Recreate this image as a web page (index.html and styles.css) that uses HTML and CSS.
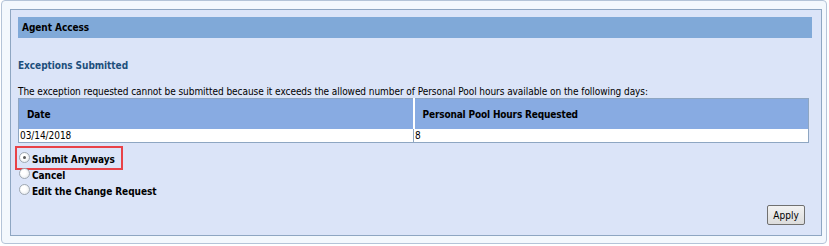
FILE: index.html
```html
<!DOCTYPE html>
<html lang="en">
<head>
    <meta charset="UTF-8">
    <title>Agent Access</title>
    <link rel="stylesheet" href="styles.css">
</head>
<body>
    <div class="window">
        <div class="panel">
            <div class="panel-title">Agent Access</div>
            <h2 class="section-title">Exceptions Submitted</h2>
            <p class="message">The exception requested cannot be submitted because it exceeds the allowed number of Personal Pool hours available on the following days:</p>
            <table class="grid">
                <thead>
                    <tr>
                        <th class="col-date">Date</th>
                        <th>Personal Pool Hours Requested</th>
                    </tr>
                </thead>
                <tbody>
                    <tr>
                        <td>03/14/2018</td>
                        <td>8</td>
                    </tr>
                </tbody>
            </table>
            <div class="options">
                <label class="option highlighted"><span class="radio checked"></span>Submit Anyways</label>
                <label class="option"><span class="radio"></span>Cancel</label>
                <label class="option"><span class="radio"></span>Edit the Change Request</label>
            </div>
            <div class="actions">
                <button class="apply-btn">Apply</button>
            </div>
        </div>
    </div>
</body>
</html>
```

FILE: styles.css
```css
body {
    margin: 0;
    background-color: #fff;
    font-family: "DejaVu Sans Condensed", "DejaVu Sans", sans-serif;
    font-size: 10px;
    letter-spacing: -0.06px;
    color: #000;
}
.window {
    width: 812px;
    height: 227px;
    margin: 0 0 0 1px;
    padding: 8px 4px 7px 8px;
    border: 1px solid #b4c4d8;
    border-radius: 4px;
    background-color: #f3f8fd;
}
.panel {
    height: 100%;
    box-sizing: border-box;
    padding: 7px 9px 0 7px;
    border: 1px solid #8ea6c2;
    background-color: #dbe4f8;
}
.panel-title {
    height: 21px;
    line-height: 21px;
    padding-left: 4px;
    background-color: #80a9d8;
    font-weight: bold;
}
.section-title {
    margin: 21px 0 0 0;
    font-size: 10px;
    font-weight: bold;
    color: #1d4f7c;
    line-height: 14px;
}
.message {
    margin: 12px 0 0 0;
    line-height: 13px;
}
.grid {
    width: calc(100% - 3px);
    border-collapse: collapse;
    border: 1px solid #8ea6c2;
}
.grid th {
    height: 30px;
    padding: 0 0 0 8px;
    text-align: left;
    letter-spacing: -0.15px;
    background-color: #88abe2;
    border-right: 2px solid #fff;
}
.grid th.col-date {
    width: 50%;
}
.grid th:last-child {
    border-right: none;
}
.grid td {
    height: 13px;
    padding: 0 0 0 1px;
    background-color: #fff;
    border-right: 1px solid #8ea6c2;
    line-height: 13px;
}
.options {
    margin-top: 8px;
    display: flex;
    flex-direction: column;
    align-items: flex-start;
}
.option {
    display: flex;
    align-items: center;
    height: 16px;
    font-weight: bold;
    position: relative;
}
.option.highlighted::after {
    content: "";
    position: absolute;
    top: -5px;
    bottom: -3px;
    left: -3px;
    right: -8px;
    border: 2px solid #e84248;
}
.radio {
    width: 11px;
    height: 11px;
    margin: -3px 2px 0 1px;
    border: 1px solid #a0a8b2;
    border-radius: 50%;
    background: radial-gradient(circle at 40% 40%, #fff 30%, #dfe3e8 100%);
    box-sizing: border-box;
    position: relative;
}
.radio.checked::after {
    content: "";
    position: absolute;
    left: 3px;
    top: 3px;
    width: 3px;
    height: 3px;
    border-radius: 50%;
    background-color: #5a5a5a;
}
.actions {
    display: flex;
    justify-content: flex-end;
    margin-top: 6px;
    padding-right: 7px;
}
.apply-btn {
    height: 20px;
    width: 38px;
    padding: 0;
    font-family: inherit;
    font-size: 10px;
    border: 1px solid #707070;
    border-radius: 2px;
    background: linear-gradient(#f2f2f2, #dcdcdc);
}
```
